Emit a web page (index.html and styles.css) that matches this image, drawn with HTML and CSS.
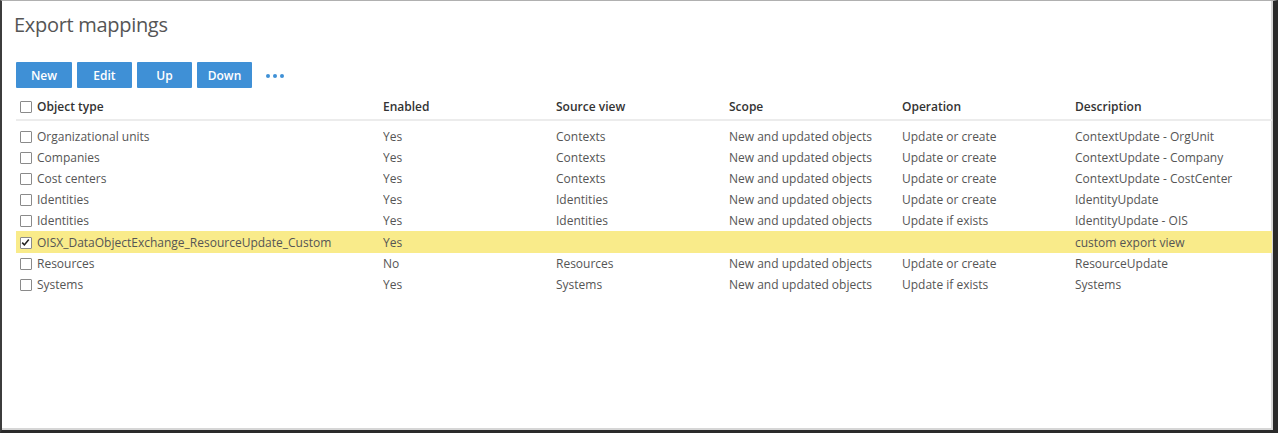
FILE: index.html
```html
<!DOCTYPE html>
<html>
<head>
<meta charset="utf-8">
<link rel="stylesheet" href="styles.css">
</head>
<body>
<div class="frame">
  <div class="page">
    <h1 class="title">Export mappings</h1>
    <div class="toolbar">
      <button class="btn btn-new">New</button>
      <button class="btn">Edit</button>
      <button class="btn">Up</button>
      <button class="btn">Down</button>
      <span class="more"><i></i><i></i><i></i></span>
    </div>
    <table class="grid">
      <colgroup>
        <col class="c1"><col class="c2"><col class="c2"><col class="c2"><col class="c2"><col class="c6">
      </colgroup>
      <thead>
        <tr>
          <th><span class="cb"></span>Object type</th>
          <th>Enabled</th>
          <th>Source view</th>
          <th>Scope</th>
          <th>Operation</th>
          <th>Description</th>
        </tr>
      </thead>
      <tbody>
        <tr class="first"><td><span class="cb"></span>Organizational units</td><td>Yes</td><td>Contexts</td><td>New and updated objects</td><td>Update or create</td><td>ContextUpdate - OrgUnit</td></tr>
        <tr><td><span class="cb"></span>Companies</td><td>Yes</td><td>Contexts</td><td>New and updated objects</td><td>Update or create</td><td>ContextUpdate - Company</td></tr>
        <tr><td><span class="cb"></span>Cost centers</td><td>Yes</td><td>Contexts</td><td>New and updated objects</td><td>Update or create</td><td>ContextUpdate - CostCenter</td></tr>
        <tr><td><span class="cb"></span>Identities</td><td>Yes</td><td>Identities</td><td>New and updated objects</td><td>Update or create</td><td>IdentityUpdate</td></tr>
        <tr><td><span class="cb"></span>Identities</td><td>Yes</td><td>Identities</td><td>New and updated objects</td><td>Update if exists</td><td>IdentityUpdate - OIS</td></tr>
        <tr class="sel"><td><span class="cb checked"><svg viewBox="0 0 11 11" width="11" height="11"><path d="M2.2 5.6 L4.4 7.9 L8.8 2.6" fill="none" stroke="#222" stroke-width="1.6"/></svg></span>OISX_DataObjectExchange_ResourceUpdate_Custom</td><td>Yes</td><td></td><td></td><td></td><td>custom export view</td></tr>
        <tr><td><span class="cb"></span>Resources</td><td>No</td><td>Resources</td><td>New and updated objects</td><td>Update or create</td><td>ResourceUpdate</td></tr>
        <tr><td><span class="cb"></span>Systems</td><td>Yes</td><td>Systems</td><td>New and updated objects</td><td>Update if exists</td><td>Systems</td></tr>
      </tbody>
    </table>
  </div>
</div>
</body>
</html>
```
FILE: styles.css
```css
html, body {
  margin: 0;
  padding: 0;
  background: #fff;
}
body {
  font-family: "Open Sans", "Noto Sans", sans-serif;
  color: #555;
}
.frame {
  width: 1278px;
  height: 433px;
  box-sizing: border-box;
  border-left: 2px solid #3c3c3c;
  border-top: 1px solid #b0b0b0;
  border-right: 5px solid #2a2a2a;
  border-bottom: 3px solid #2a2a2a;
}
.page {
  height: 100%;
  box-sizing: border-box;
  border-right: 2px solid #d6d6d6;
  border-bottom: 2px solid #d6d6d6;
  padding: 0 0 0 14px;
  background: #fff;
}
.title {
  margin: 0 0 0 -2px;
  padding: 10px 0 0 0;
  font-size: 20px;
  font-weight: 400;
  line-height: 28px;
  color: #555;
  letter-spacing: -0.3px;
}
.toolbar {
  display: flex;
  align-items: center;
  gap: 5px;
  margin-top: 23px;
  height: 26px;
}
.btn {
  width: 55px;
  height: 26px;
  padding: 0;
  border: none;
  border-radius: 1px;
  background: #3f90d6;
  color: #fff;
  font-family: "Open Sans", "Noto Sans", sans-serif;
  font-size: 12px;
  font-weight: 600;
}
.btn-new { width: 56px; }
.more {
  display: flex;
  gap: 3px;
  margin-left: 9px;
  margin-top: 1px;
}
.more i {
  display: block;
  width: 4px;
  height: 4px;
  border-radius: 50%;
  background: #3f90d6;
}
.grid {
  border-collapse: collapse;
  table-layout: fixed;
  width: 1256px;
  margin-top: 7px;
  font-size: 12px;
}
.grid col.c1 { width: 367px; }
.grid col.c2 { width: 173px; }
.grid col.c6 { width: 197px; }
.grid th, .grid td {
  padding: 0;
  text-align: left;
  white-space: nowrap;
  overflow: hidden;
}
.grid th {
  font-weight: 600;
  color: #333;
  height: 22px;
  border-bottom: 2px solid #ececec;
}
.grid thead th {
  padding-bottom: 2px;
}
.grid td {
  height: 21px;
  color: #555;
}
.grid tr.first td {
  padding-top: 5px;
}
.grid th:first-child, .grid td:first-child {
  padding-left: 4px;
}
.grid tr.sel td {
  background: #f9eb8a;
  height: 22px;
}
.cb {
  display: inline-block;
  vertical-align: -2px;
  width: 10px;
  height: 10px;
  border: 1px solid #8a8a8a;
  border-radius: 1px;
  margin-right: 5px;
  background: #fff;
  position: relative;
}
.cb svg {
  position: absolute;
  left: -1px;
  top: -1px;
}
```
